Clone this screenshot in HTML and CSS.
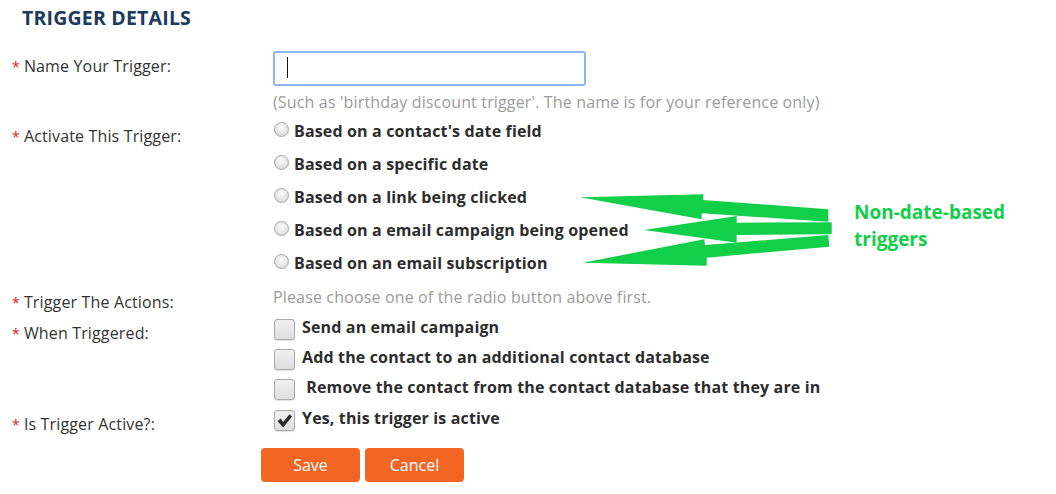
FILE: index.html
```html
<!DOCTYPE html>
<html lang="en">
<head>
<meta charset="utf-8">
<title>Trigger Details</title>
<link rel="stylesheet" href="styles.css">
</head>
<body>
<div class="page">
  <h2 class="title">TRIGGER DETAILS</h2>

  <div class="row row-name">
    <div class="lbl"><span class="req">*</span>Name Your Trigger:</div>
    <div class="ctl">
      <div class="text-input"><span class="caret"></span></div>
      <div class="hint hint-name">(Such as 'birthday discount trigger'. The name is for your reference only)</div>
    </div>
  </div>

  <div class="row row-activate">
    <div class="lbl"><span class="req">*</span>Activate This Trigger:</div>
    <div class="ctl">
      <label class="opt-radio"><span class="radio"></span><span class="opt-text">Based on a contact's date field</span></label>
      <label class="opt-radio"><span class="radio"></span><span class="opt-text">Based on a specific date</span></label>
      <label class="opt-radio"><span class="radio"></span><span class="opt-text">Based on a link being clicked</span></label>
      <label class="opt-radio"><span class="radio"></span><span class="opt-text">Based on a email campaign being opened</span></label>
      <label class="opt-radio"><span class="radio"></span><span class="opt-text">Based on an email subscription</span></label>
    </div>
  </div>

  <div class="row row-actions">
    <div class="lbl"><span class="req">*</span>Trigger The Actions:</div>
    <div class="ctl">
      <div class="hint">Please choose one of the radio button above first.</div>
    </div>
  </div>

  <div class="row row-when">
    <div class="lbl lbl-check"><span class="req">*</span>When Triggered:</div>
    <div class="ctl">
      <label class="opt-check"><span class="checkbox"></span><span class="opt-text">Send an email campaign</span></label>
      <label class="opt-check"><span class="checkbox"></span><span class="opt-text">Add the contact to an additional contact database</span></label>
      <label class="opt-check"><span class="checkbox"></span><span class="opt-text">&nbsp;Remove the contact from the contact database that they are in</span></label>
    </div>
  </div>

  <div class="row row-active">
    <div class="lbl lbl-check"><span class="req">*</span>Is Trigger Active?:</div>
    <div class="ctl">
      <label class="opt-check"><span class="checkbox checked"><svg viewBox="0 0 21 21" width="21" height="21"><path d="M3.6 11.2 L6.6 8.6 L9.1 11.9 L15.6 4.2 L18 6.6 L9.2 17.4 Z" fill="#2b2b2b"/></svg></span><span class="opt-text">Yes, this trigger is active</span></label>
    </div>
  </div>

  <div class="row row-buttons">
    <div></div>
    <div class="buttons">
      <button class="btn">Save</button>
      <button class="btn">Cancel</button>
    </div>
  </div>

  <div class="annotation">
    <svg class="arrows" viewBox="0 0 1056 494" width="1056" height="494">
      <polygon fill="#12cf4a" points="580,197.3 703.3,194.3 703.3,200 828.3,209.3 828.3,221.7 701.7,213.3 701.7,219.3"/>
      <polygon fill="#12cf4a" points="644,230 736.7,216 736.7,222.7 831.7,222.3 831.7,234.3 736.7,235 736.7,242.7"/>
      <polygon fill="#12cf4a" points="582.7,262.7 704.3,239.3 705,245 828.3,235 829.3,246.7 706.7,257.7 706.7,265.7"/>
    </svg>
    <div class="note">Non-date-based<br>triggers</div>
  </div>
</div>
</body>
</html>
```

FILE: styles.css
```css
* { box-sizing: border-box; }

html, body {
  margin: 0;
  padding: 0;
  background: #ffffff;
}

body {
  font-family: "Open Sans", "DejaVu Sans", sans-serif;
  color: #333333;
  font-size: 16px;
  letter-spacing: 0.15px;
}

.page {
  position: relative;
  width: 1056px;
  height: 494px;
  padding: 8px 0 0 12px;
  overflow: hidden;
}

.title {
  margin: 0;
  padding-left: 10px;
  font-size: 19.5px;
  line-height: 20px;
  font-weight: 700;
  color: #1b3a5c;
  letter-spacing: 0.2px;
}

.row {
  display: grid;
  grid-template-columns: 249px 1fr;
}

.row-name { margin-top: 23px; }
.row-activate { margin-top: 9px; }
.row-actions { margin-top: 14px; }
.row-when { margin-top: 3px; }
.row-active { margin-top: 7px; }
.row-buttons { margin-top: 13px; }

.lbl {
  padding-top: 5px;
  font-size: 16px;
  line-height: 20px;
  color: #333333;
}

.lbl-check { padding-top: 7px; }

.req {
  color: #e8141a;
  font-size: 14px;
  margin-right: 4px;
}

.ctl {
  padding-left: 12px;
}

.text-input {
  width: 313px;
  height: 35px;
  border: 2px solid #8db5f3;
  border-radius: 3px;
  background: #fff;
  padding: 4px 0 0 12px;
}

.caret {
  display: block;
  width: 1px;
  height: 21px;
  background: #111;
}

.hint {
  font-size: 16px;
  line-height: 20px;
  color: #9b9b9b;
}

.hint-name { margin-top: 6px; }

.opt-radio {
  display: flex;
  align-items: flex-start;
  gap: 5px;
  margin-bottom: 13px;
}

.opt-radio:last-child { margin-bottom: 0; }

.radio {
  flex: none;
  width: 15px;
  height: 15px;
  margin: 1px 0 0 1px;
  border-radius: 50%;
  border: 1px solid #a7a7a7;
  background: radial-gradient(circle at 50% 35%, #fbfbfb 0%, #e6e6e6 55%, #cfcfcf 100%);
}

.opt-text {
  font-weight: 700;
  font-size: 16px;
  line-height: 20px;
  color: #2d2d2d;
  white-space: nowrap;
}

.opt-check {
  display: flex;
  align-items: flex-start;
  gap: 7px;
  margin-bottom: 6px;
}

.opt-check:last-child { margin-bottom: 0; }

.opt-check .opt-text { padding-top: 1px; }

.checkbox {
  flex: none;
  width: 21px;
  height: 21px;
  margin: 3px 0 0 1px;
  border: 1px solid #a9a9a9;
  border-radius: 3px;
  background: linear-gradient(#f1f1f1, #dedede);
  box-shadow: 0 1px 1px rgba(0, 0, 0, 0.12);
  position: relative;
}

.checkbox svg {
  position: absolute;
  left: -1px;
  top: -1px;
}

.buttons {
  display: flex;
  gap: 5px;
}

.btn {
  width: 99px;
  height: 34px;
  border: none;
  border-radius: 4px;
  background: #f26522;
  color: #ffffff;
  font-family: "Open Sans", "DejaVu Sans", sans-serif;
  font-size: 16px;
  padding: 0;
}

.annotation {
  position: absolute;
  left: 0;
  top: 0;
  width: 1056px;
  height: 494px;
  pointer-events: none;
}

.arrows {
  position: absolute;
  left: 0;
  top: 0;
}

.note {
  position: absolute;
  left: 854px;
  top: 199px;
  font-size: 19px;
  line-height: 27px;
  font-weight: 700;
  color: #12cf4a;
  letter-spacing: 0;
}
```
